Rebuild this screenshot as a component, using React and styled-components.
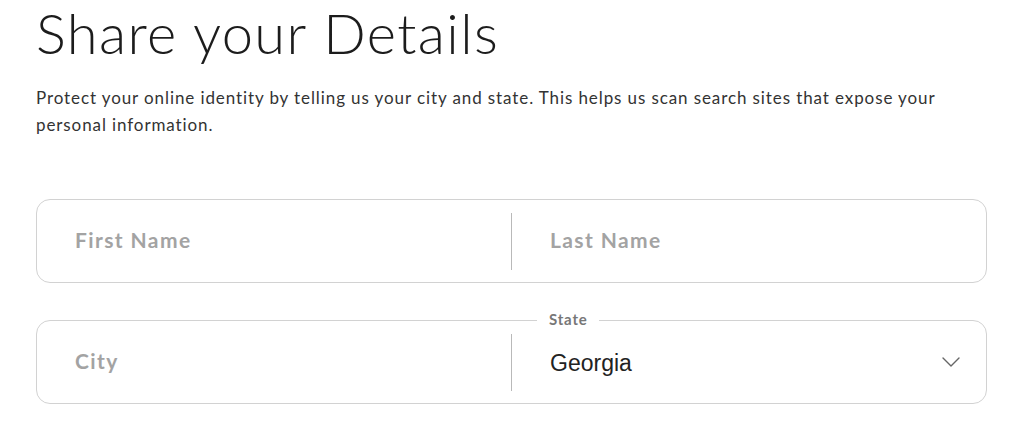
import React from 'react';
import styled, { createGlobalStyle } from 'styled-components';

const GlobalStyle = createGlobalStyle`
  html, body {
    margin: 0;
    padding: 0;
    background: #fff;
  }
  body {
    font-family: Lato, "Noto Sans", sans-serif;
  }
`;

const Page = styled.div`
  width: 951px;
  padding: 0 36px;
`;

const Title = styled.h1`
  margin: 0;
  padding-top: 0;
  font-family: Lato, sans-serif;
  font-weight: 300;
  font-size: 56px;
  line-height: 66px;
  color: #1c1c1c;
  letter-spacing: 1.4px;
`;

const Intro = styled.p`
  margin: 18px 0 0;
  font-family: Lato, sans-serif;
  font-size: 17px;
  line-height: 27px;
  letter-spacing: 0.9px;
  color: #333;
  max-width: 930px;
`;

const Form = styled.form`
  display: flex;
  flex-direction: column;
  gap: 37px;
  margin-top: 61px;
`;

const FieldRow = styled.div`
  position: relative;
  display: grid;
  grid-template-columns: 1fr 1px 1fr;
  height: 84px;
  box-sizing: border-box;
  border: 1px solid #d2d2d2;
  border-radius: 14px;
`;

const Field = styled.div`
  display: flex;
  align-items: center;
  justify-content: space-between;
  padding: 0 26px 0 38px;
`;

const Divider = styled.span`
  align-self: center;
  width: 1px;
  height: 57px;
  background: #b9b9b9;
`;

const Placeholder = styled.span`
  font-family: Lato, sans-serif;
  font-weight: 700;
  font-size: 21px;
  letter-spacing: 1.4px;
  color: #a3a3a3;
  padding-bottom: 3px;
`;

const Value = styled.span`
  font-family: "Liberation Sans", Arial, sans-serif;
  font-size: 23px;
  color: #222;
  padding-top: 2px;
`;

const FloatingLabel = styled.span`
  position: absolute;
  top: -11px;
  left: ${(p) => p.offset}px;
  padding: 0 11px 0 12px;
  background: #fff;
  font-family: Lato, sans-serif;
  font-weight: 700;
  font-size: 15px;
  letter-spacing: 0.8px;
  line-height: 18px;
  color: #777;
`;

const Chevron = () => (
  <svg width="18" height="10" viewBox="0 0 18 10" fill="none">
    <polyline points="1,1 9,9 17,1" stroke="#666" strokeWidth="1.4" strokeLinecap="round" strokeLinejoin="round" />
  </svg>
);

export default function App() {
  return (
    <Page>
      <GlobalStyle />
      <Title>Share your Details</Title>
      <Intro>
        Protect your online identity by telling us your city and state. This helps us scan search sites that expose your personal information.
      </Intro>
      <Form>
        <FieldRow>
          <Field>
            <Placeholder>First Name</Placeholder>
          </Field>
          <Divider />
          <Field>
            <Placeholder>Last Name</Placeholder>
          </Field>
        </FieldRow>
        <FieldRow>
          <FloatingLabel offset={500}>State</FloatingLabel>
          <Field>
            <Placeholder>City</Placeholder>
          </Field>
          <Divider />
          <Field>
            <Value>Georgia</Value>
            <Chevron />
          </Field>
        </FieldRow>
      </Form>
    </Page>
  );
}
